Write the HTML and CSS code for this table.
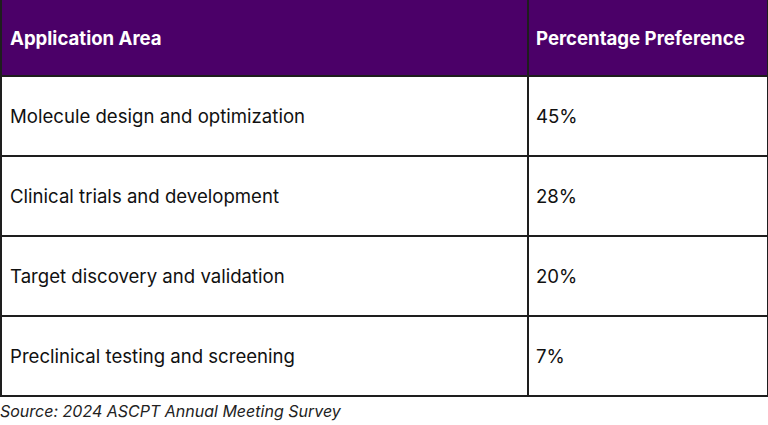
FILE: index.html
```html
<!DOCTYPE html>
<html lang="en">
<head>
<meta charset="utf-8">
<title>Application Area Preferences</title>
<link rel="stylesheet" href="styles.css">
</head>
<body>
<table class="pref-table">
  <colgroup>
    <col class="col-area">
    <col class="col-pct">
  </colgroup>
  <thead>
    <tr class="head-row">
      <th>Application Area</th>
      <th>Percentage Preference</th>
    </tr>
  </thead>
  <tbody>
    <tr class="data-row"><td>Molecule design and optimization</td><td>45%</td></tr>
    <tr class="data-row"><td>Clinical trials and development</td><td>28%</td></tr>
    <tr class="data-row"><td>Target discovery and validation</td><td>20%</td></tr>
    <tr class="data-row"><td>Preclinical testing and screening</td><td>7%</td></tr>
  </tbody>
</table>
<p class="source">Source: 2024 ASCPT Annual Meeting Survey</p>
</body>
</html>
```

FILE: styles.css
```css
html, body {
  margin: 0;
  padding: 0;
  background: #ffffff;
}
body {
  font-family: Inter, "Noto Sans", "Liberation Sans", sans-serif;
  color: #111111;
}
.pref-table {
  width: 767px;
  table-layout: fixed;
  border-collapse: collapse;
}
.col-area { width: 527px; }
.col-pct { width: 240px; }
.pref-table th,
.pref-table td {
  border: 2px solid #1e1e1e;
  padding: 0 8px;
  text-align: left;
  vertical-align: middle;
  font-size: 18.6px;
  line-height: 22px;
}
.pref-table td:last-child,
.pref-table th:last-child {
  padding-left: 7px;
}
.head-row th {
  background: #4b0068;
  color: #ffffff;
  font-weight: 700;
  height: 75px;
  border-top: none;
}
.data-row td {
  height: 78px;
  font-weight: 400;
}
.source {
  margin: 4px 0 0 0;
  font-size: 16px;
  font-style: italic;
  color: #222222;
}
```
